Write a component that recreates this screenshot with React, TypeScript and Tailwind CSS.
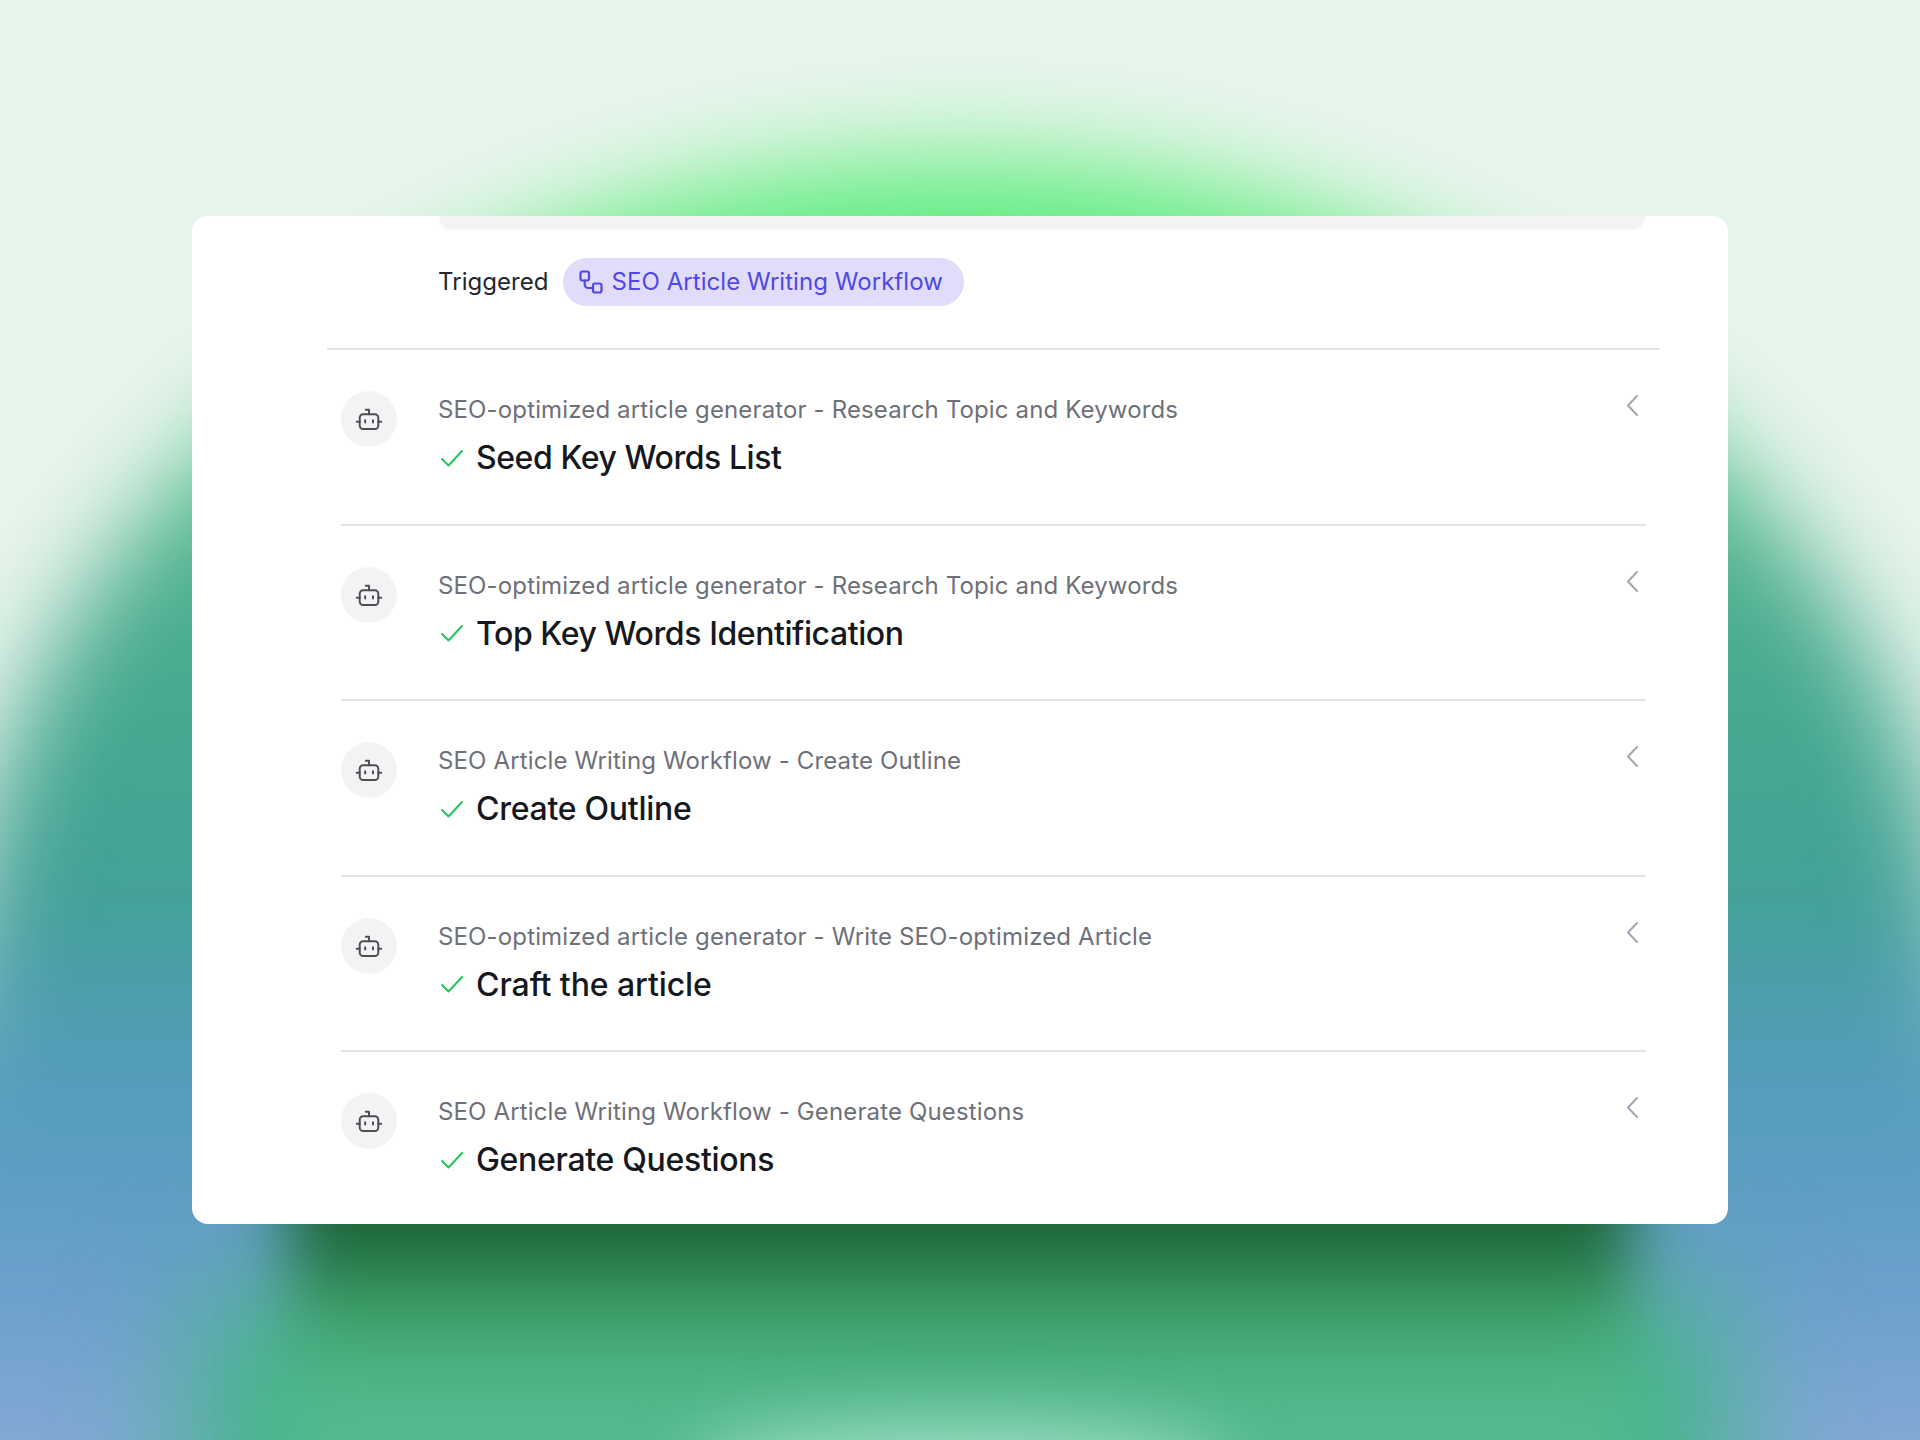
import React from "react";

const rows = [
  ["SEO-optimized article generator - Research Topic and Keywords", "Seed Key Words List", "tracking-[-0.44px]"],
  ["SEO-optimized article generator - Research Topic and Keywords", "Top Key Words Identification", "tracking-[-0.42px]"],
  ["SEO Article Writing Workflow - Create Outline", "Create Outline", "tracking-[-0.27px]"],
  ["SEO-optimized article generator - Write SEO-optimized Article", "Craft the article", "tracking-[-0.08px]"],
  ["SEO Article Writing Workflow - Generate Questions", "Generate Questions", "tracking-[-0.31px]"],
];

function Bot() {
  return (
    <svg width="28" height="28" viewBox="0 0 28 28" fill="none" stroke="#4b5058" strokeWidth="2" strokeLinecap="round" strokeLinejoin="round">
      <path d="M14 9.3V4.7H10.8" />
      <rect x="4.7" y="9.3" width="18.6" height="14.7" rx="3.5" />
      <path d="M1.8 16.7h2.9M23.3 16.7h2.9" />
      <path d="M10.2 15.2v2.2M18 15.2v2.2" />
    </svg>
  );
}

function Flow() {
  return (
    <svg width="24" height="24" viewBox="0 0 24 24" fill="none" stroke="#5048e5" strokeWidth="2.2" strokeLinecap="round" strokeLinejoin="round">
      <rect x="1.5" y="1.5" width="8.5" height="9" rx="2" />
      <rect x="14" y="13.5" width="8.5" height="9" rx="2" />
      <path d="M5.7 10.5v4a3.5 3.5 0 0 0 3.5 3.5H14" />
    </svg>
  );
}

export default function App() {
  return (
    <div className="relative w-[1920px] h-[1440px] overflow-hidden bg-[#e8f5ec] font-['Inter',sans-serif]">
      <div className="absolute left-[-40px] top-[158px] w-[2000px] h-[1700px] rounded-[50%] blur-[50px] bg-[linear-gradient(180deg,#62ee80_0%,#62ee80_5%,#50b090_24%,#45a890_33%,#44a09a_47%,#4d9ab5_59%,#6b9fcc_68%,#82a9d4_76%)]" />
      <div className="absolute left-[-120px] top-[900px] w-[2160px] h-[700px] blur-[40px] bg-[linear-gradient(180deg,transparent_0%,#559dbc_30%,#6b9fcc_55%,#82a9d4_78%)]" />
      <div className="absolute left-[190px] top-[1290px] w-[1540px] h-[300px] blur-[60px] bg-[#47b58c]" />
      <div className="absolute left-[290px] top-[1150px] w-[1340px] h-[340px] blur-[32px] bg-[linear-gradient(180deg,#1a6336_0%,#1a6336_24%,#3a9c64_44%,#4db282_64%,#56ba90_80%,#56ba90_100%)]" />
      <div className="absolute left-[690px] top-[1425px] w-[540px] h-[100px] rounded-[50%] blur-[35px] bg-[#a0e0c6]" />
      <div className="relative mx-auto mt-[216px] w-[1536px] h-[1008px] bg-white rounded-[16px] overflow-hidden flex flex-col">
        <div className="ml-[247px] mr-[83px] h-[13px] shrink-0 bg-[#f3f3f3] rounded-b-[18px] shadow-[0_1px_3px_rgba(0,0,0,0.04)]" />
        <div className="h-[121px] shrink-0 ml-[135px] mr-[68px] pl-[111px] pt-[29px] border-b-2 border-[#e3e3e3]">
          <div className="flex items-center gap-[14px]">
            <span className="text-[24px] leading-[48px] tracking-[0.05px] text-[#24282d]">Triggered</span>
            <span className="flex items-center h-[48px] rounded-full bg-[#e0dcfa] pl-[16px] pr-[21px] gap-[9px] text-[24px] tracking-[0.05px] text-[#5048e5]">
              <Flow />
              SEO Article Writing Workflow
            </span>
          </div>
        </div>
        <div className="flex flex-col ml-[149px] mr-[82px]">
          {rows.map(([sub, title, track], i) => (
            <div key={i} className={`h-[175.5px] shrink-0 flex pt-[41px] ${i < 4 ? "border-b-2 border-[#e3e3e3]" : ""}`}>
              <div className="w-[56px] h-[56px] rounded-full bg-[#f3f3f3] flex items-center justify-center shrink-0">
                <Bot />
              </div>
              <div className="ml-[41px] flex-1 min-w-0">
                <div className="mt-[1px] text-[24px] leading-[36px] tracking-[0.14px] text-[#6e7079]">{sub}</div>
                <div className="mt-[6px] flex items-center">
                  <svg className="ml-[2px] mr-[12px] -mt-[1px]" width="24" height="24" viewBox="0 0 24 24" fill="none" stroke="#22c55e" strokeWidth="2" strokeLinecap="round" strokeLinejoin="round">
                    <path d="M2 13 8.5 19.5 22 5" />
                  </svg>
                  <span className={`text-[32px] leading-[48px] font-medium text-[#15181d] ${track}`}>{title}</span>
                </div>
              </div>
              <svg className="mr-[3px] mt-[1px] shrink-0" width="20" height="28" viewBox="0 0 20 28" fill="none" stroke="#a6a6b2" strokeWidth="2" strokeLinecap="round" strokeLinejoin="round">
                <path d="M14 4 5 13.5 14 23" />
              </svg>
            </div>
          ))}
        </div>
      </div>
    </div>
  );
}
